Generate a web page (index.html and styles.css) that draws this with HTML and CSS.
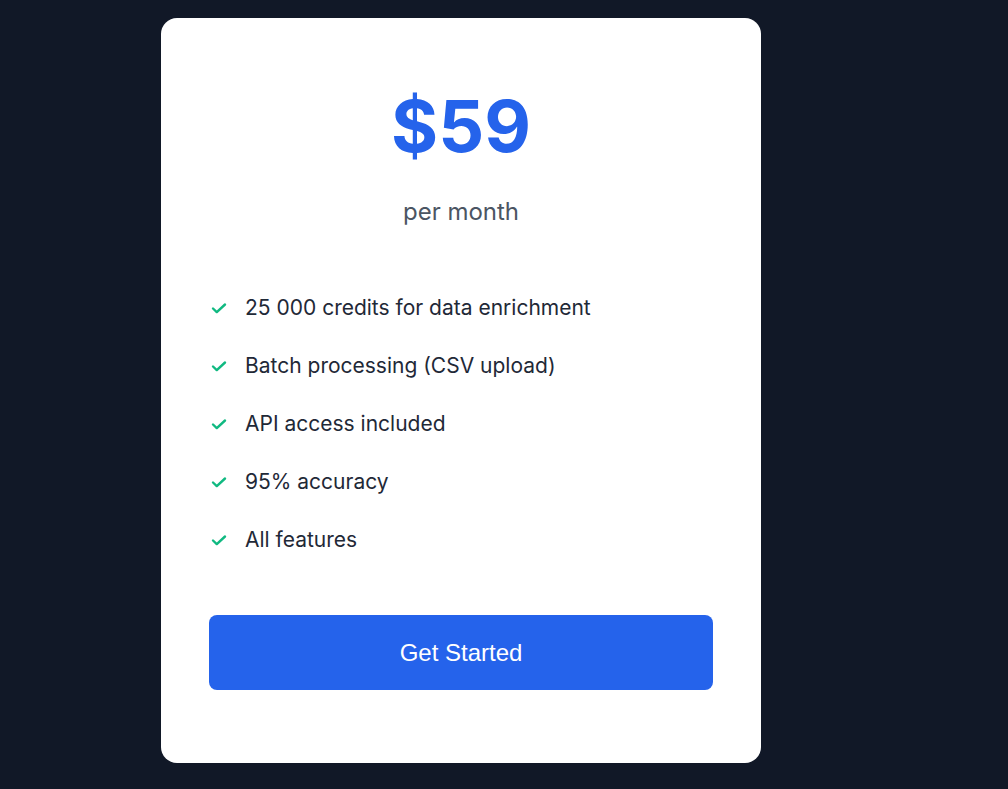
FILE: index.html
```html
<!DOCTYPE html>
<html lang="en">
<head>
<meta charset="utf-8">
<title>Pricing</title>
<link rel="stylesheet" href="styles.css">
</head>
<body>
<main class="page">
  <section class="card">
    <div class="price">$59</div>
    <div class="period">per month</div>
    <ul class="features">
      <li class="feature"><svg class="check" viewBox="0 0 20 20" aria-hidden="true"><path d="M4 10.5l3.8 3.6 8.2-7.6" fill="none" stroke="currentColor" stroke-width="2.4" stroke-linecap="round" stroke-linejoin="round"/></svg><span>25 000 credits for data enrichment</span></li>
      <li class="feature"><svg class="check" viewBox="0 0 20 20" aria-hidden="true"><path d="M4 10.5l3.8 3.6 8.2-7.6" fill="none" stroke="currentColor" stroke-width="2.4" stroke-linecap="round" stroke-linejoin="round"/></svg><span>Batch processing (CSV upload)</span></li>
      <li class="feature"><svg class="check" viewBox="0 0 20 20" aria-hidden="true"><path d="M4 10.5l3.8 3.6 8.2-7.6" fill="none" stroke="currentColor" stroke-width="2.4" stroke-linecap="round" stroke-linejoin="round"/></svg><span>API access included</span></li>
      <li class="feature"><svg class="check" viewBox="0 0 20 20" aria-hidden="true"><path d="M4 10.5l3.8 3.6 8.2-7.6" fill="none" stroke="currentColor" stroke-width="2.4" stroke-linecap="round" stroke-linejoin="round"/></svg><span>95% accuracy</span></li>
      <li class="feature"><svg class="check" viewBox="0 0 20 20" aria-hidden="true"><path d="M4 10.5l3.8 3.6 8.2-7.6" fill="none" stroke="currentColor" stroke-width="2.4" stroke-linecap="round" stroke-linejoin="round"/></svg><span>All features</span></li>
    </ul>
    <button class="cta" type="button">Get Started</button>
  </section>
</main>
</body>
</html>
```
FILE: styles.css
```css
html, body {
  margin: 0;
  padding: 0;
  background: #111827;
  font-family: Inter, "Noto Sans", sans-serif;
}
.page {
  padding: 18px 0 0 161px;
}
.card {
  box-sizing: border-box;
  width: 600px;
  height: 745px;
  background: #ffffff;
  border-radius: 16px;
  padding: 64px 48px 0;
  display: flex;
  flex-direction: column;
}
.price {
  text-align: center;
  font-size: 72px;
  font-weight: 700;
  line-height: 88px;
  color: #2563eb;
}
.period {
  text-align: center;
  font-size: 24px;
  color: #4b5563;
  margin-top: 26px;
  line-height: 32px;
}
.features {
  list-style: none;
  margin: 66px 0 0;
  padding: 0;
  display: flex;
  flex-direction: column;
  gap: 30px;
}
.feature {
  display: flex;
  align-items: center;
  gap: 16px;
  font-size: 21px;
  line-height: 28px;
  color: #1f2937;
}
.check {
  width: 20px;
  height: 20px;
  color: #10b981;
  flex: none;
}
.cta {
  margin-top: 61px;
  height: 75px;
  border: none;
  border-radius: 8px;
  background: #2563eb;
  color: #ffffff;
  font-family: "Liberation Sans", Arial, sans-serif;
  font-size: 24px;
}
```
